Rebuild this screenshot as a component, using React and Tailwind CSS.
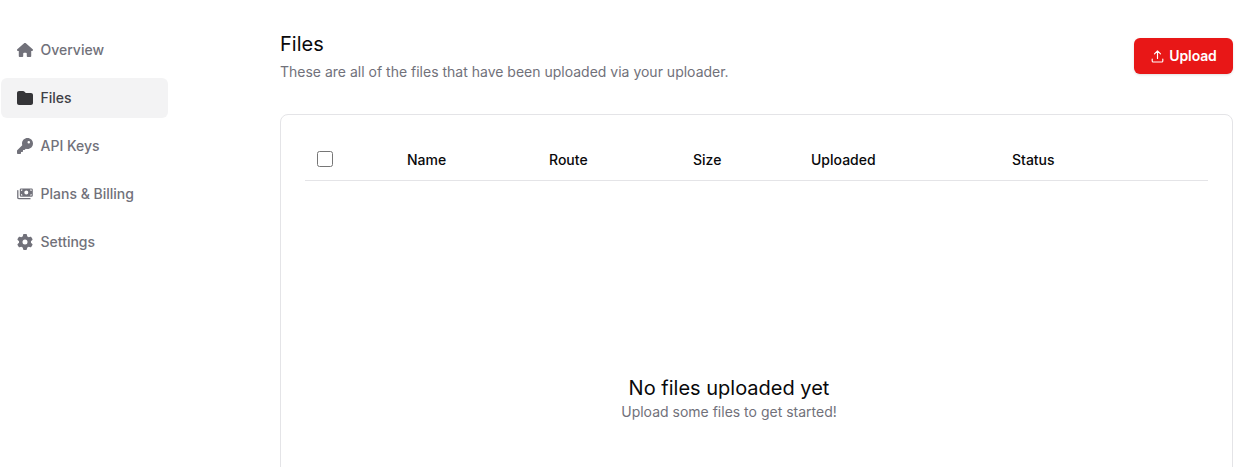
import { FaHouse, FaFolder, FaKey, FaGear } from "react-icons/fa6";

function BillsIcon({ className }) {
  return (
    <svg className={className} viewBox="0 0 16 16" fill="none">
      <path d="M.8 4.6v7.1a1 1 0 0 0 1 1H13" stroke="currentColor" strokeWidth="1.3" strokeLinecap="round" />
      <path
        fill="currentColor"
        fillRule="evenodd"
        d="M4 2.4h10.6A1.2 1.2 0 0 1 15.8 3.6v6a1.2 1.2 0 0 1-1.2 1.2H4a1.2 1.2 0 0 1-1.2-1.2v-6A1.2 1.2 0 0 1 4 2.4ZM9.3 4.6a2 2 0 1 0 0 4 2 2 0 0 0 0-4ZM4 3.6v1.5A1.5 1.5 0 0 0 5.5 3.6ZM13.1 3.6a1.5 1.5 0 0 0 1.5 1.5V3.6ZM4 8.1v1.5h1.5A1.5 1.5 0 0 0 4 8.1ZM14.6 8.1a1.5 1.5 0 0 0-1.5 1.5h1.5Z"
      />
    </svg>
  );
}

const navigation = [
  { label: "Overview", icon: FaHouse },
  { label: "Files", icon: FaFolder, active: true },
  { label: "API Keys", icon: FaKey },
  { label: "Plans & Billing", icon: BillsIcon },
  { label: "Settings", icon: FaGear },
];

function NavItem({ label, icon: Icon, active }) {
  return (
    <a
      className={
        "flex h-10 items-center gap-[7.5px] rounded-md px-4 text-sm font-medium " +
        (active ? "bg-[#f3f3f4] text-[#3f3f46]" : "text-[#71717a]")
      }
    >
      <Icon className={active ? "size-4 shrink-0 text-[#353538]" : "size-4 shrink-0"} />
      <span>{label}</span>
    </a>
  );
}

function UploadIcon() {
  return (
    <svg className="size-[15px]" viewBox="0 0 15 15" fill="none" stroke="currentColor" strokeWidth="1.15" strokeLinecap="round" strokeLinejoin="round">
      <path d="M7.5 9.5V2M4.5 4.8l3-3 3 3M2.2 10v1.9a1.1 1.1 0 0 0 1.1 1.1h8.4a1.1 1.1 0 0 0 1.1-1.1V10" />
    </svg>
  );
}

export default function App() {
  return (
    <div className="flex h-[467px] overflow-hidden bg-white font-['Inter',sans-serif] text-[#09090b]">
      <nav className="ml-px mt-[30px] flex w-[167px] shrink-0 flex-col gap-2">
        {navigation.map((item) => (
          <NavItem key={item.label} {...item} />
        ))}
      </nav>
      <main className="ml-28 mr-[18px] flex min-w-0 flex-1 flex-col">
        <header className="flex h-[114px] shrink-0 items-start justify-between">
          <div className="pt-[30px]">
            <h1 className="text-xl leading-7">Files</h1>
            <p className="text-sm leading-7 text-[#71717a]">
              These are all of the files that have been uploaded via your uploader.
            </p>
          </div>
          <button className="mt-[38px] flex h-9 w-[99px] items-center justify-center gap-1 rounded-md bg-[#e81717] text-sm font-semibold tracking-[-0.01em] text-white shadow-sm">
            <UploadIcon />
            Upload
          </button>
        </header>
        <section className="h-[500px] shrink-0 rounded-lg border border-[#e4e4e7] px-6 pt-6">
          <div className="grid h-[42px] grid-cols-[102px_142px_144px_118px_201px_1fr] items-center border-b border-[#e4e4e7] text-sm font-medium">
            <span className="flex pb-0.5 pl-3">
              <input type="checkbox" className="size-4" />
            </span>
            <span>Name</span>
            <span>Route</span>
            <span>Size</span>
            <span>Uploaded</span>
            <span>Status</span>
          </div>
          <div className="mr-[55px] flex flex-col items-center pt-[193px]">
            <h2 className="text-xl leading-7">No files uploaded yet</h2>
            <p className="text-sm leading-5 text-[#71717a]">Upload some files to get started!</p>
          </div>
        </section>
      </main>
    </div>
  );
}
